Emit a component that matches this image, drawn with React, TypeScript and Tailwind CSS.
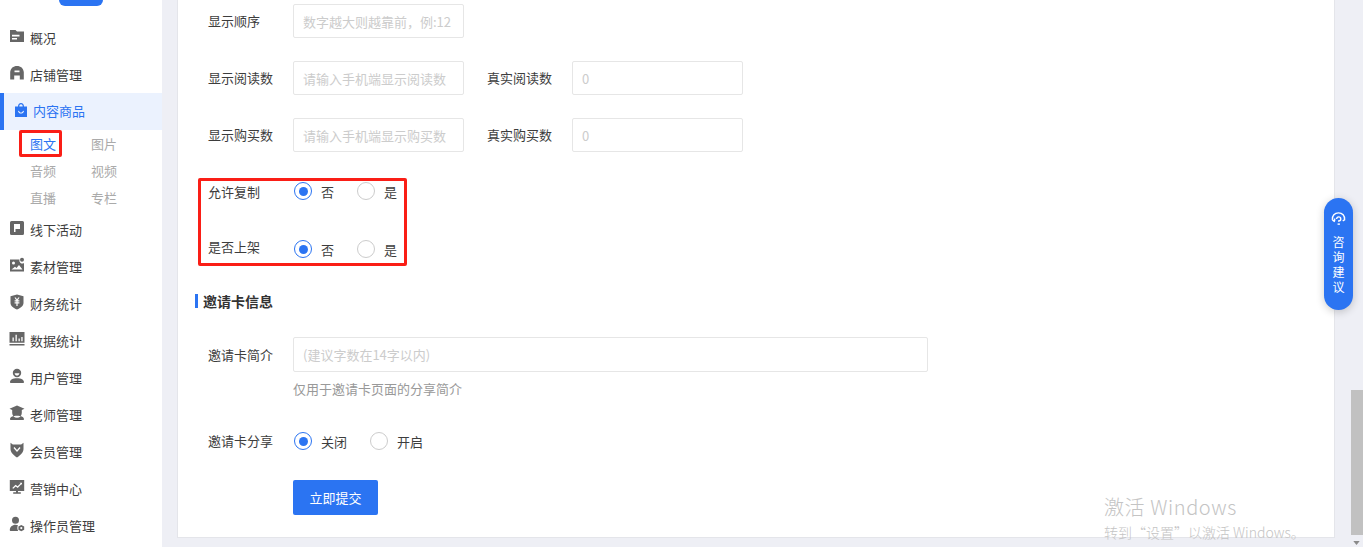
import type { ReactNode } from 'react'

const icons: Record<string, ReactNode> = {
  folder: <path d="M1 2h5.500L8 3.500h7V14H1zM3 6.800v1.700h7.500V6.800zm0 3.200v1.500h5V10z" fillRule="evenodd" />,
  store: <path d="M8 1c3.800 0 6.300 2.300 6.800 6v7.500h-4V10.500H5.200v4h-4V7C1.700 3.300 4.200 1 8 1zM5.500 5.500v1.700h5V5.500z" fillRule="evenodd" />,
  bag: <path d="M5 4.500C5 2.500 6.200 1 8 1s3 1.500 3 3.500h3V15H2V4.500zm1.300 0h3.400C9.700 3.200 9 2.300 8 2.300s-1.700.9-1.700 2.200zM5 9c.5 1.800 1.600 2.600 3 2.600S10.500 10.800 11 9l-1-.3c-.3 1.200-1 1.800-2 1.800s-1.700-.6-2-1.800z" fillRule="evenodd" />,
  flag: <path d="M2.500 1h11A1.500 1.500 0 0 1 15 2.500v11a1.500 1.500 0 0 1-1.500 1.500h-11A1.500 1.500 0 0 1 1 13.500v-11A1.500 1.500 0 0 1 2.500 1zM5 4v8h1.500V9H11V4z" fillRule="evenodd" />,
  image: <path d="M1 2.500h9.500a3 3 0 0 0 4.500 3.500v8.500H1zM4.500 4.500a1.500 1.500 0 1 0 0 3 1.500 1.500 0 0 0 0-3zM2.500 12.500h11L10 8l-2.500 3-1.500-1.300zM13 .8a2 2 0 1 1 0 4 2 2 0 0 1 0-4z" fillRule="evenodd" />,
  shield: <path d="M8 .5l6.500 1.800V9c0 3-2.800 5-6.500 6.500C4.300 14 1.500 12 1.500 9V2.300zM5.500 3.500l1.700 2.800H5.600v1.100h1.800v.9H5.600v1.100h1.800V12h1.200v-2.600h1.800V8.300H8.600v-.9h1.800V6.300H8.800l1.700-2.800H9.200L8 5.600 6.800 3.500z" fillRule="evenodd" />,
  chart: <path d="M.5 1h15v10.800H.5zM3.500 6.500v3.800h1.300V6.500zm3-2.800v6.600h1.300V3.700zm3 3.800v2.800h1.300V7.500zm2.800-1.500v4.300h1.300V6zM.5 13h15v1.500H.5z" fillRule="evenodd" />,
  user: <path d="M8 .8a4.200 4.200 0 1 1 0 8.400A4.200 4.200 0 0 1 8 .8zM5.600 5.300C5.900 7 6.900 7.600 8 7.600s2.100-.6 2.400-2.300zM1 14c.2-2.300 2.700-3.800 7-3.800s6.800 1.500 7 3.800c0 .6-.4 1-1 1H2c-.6 0-1-.4-1-1z" fillRule="evenodd" />,
  teacher: <path d="M8 .5l7.500 3.200-2.700 1.200V8A4.800 4.800 0 0 1 3.200 8V4.900L.5 3.700zM1 14c.3-2.200 3-3.300 7-3.300s6.700 1.100 7 3.300c0 .6-.4 1-1 1H2c-.6 0-1-.4-1-1z" fillRule="evenodd" />,
  badge: <path d="M1.500.8l2.300 1.700h8.400L14.500.8v6.200c0 3.500-3.300 6.500-6.500 8.500-3.200-2-6.500-5-6.500-8.500zM4.500 6l3.500 4 3.500-4-1-.9L8 8 5.500 5.100z" fillRule="evenodd" />,
  monitor: <path d="M.8 1h14.400v11H9v1.300h2.800v1.400H4.200v-1.400H7V12H.8zM3.300 9l.9.8 2.500-2.400 2 1.500L12.500 5l.5 1.300V3.800h-2.500l1 .6-2.900 2.800-2-1.500z" fillRule="evenodd" />,
  operator: <path d="M6.500.8a3.500 3.500 0 1 1 0 7 3.500 3.500 0 0 1 0-7zM.8 14c0-3 2.400-5.300 5.700-5.300 1 0 1.800.2 2.500.6-.9 1.400-.9 3.800.2 5.700H1.800c-.6 0-1-.4-1-1zM12.300 9l2.900 1.600v3.100l-2.900 1.600-2.900-1.600v-3.100zm0 2a1.100 1.100 0 1 0 0 2.200 1.100 1.100 0 0 0 0-2.200z" fillRule="evenodd" />,
}

function MenuIcon({ name, active }: { name: string; active?: boolean }) {
  return (
    <svg viewBox="0 0 16 16" className={`h-[16px] w-[16px] shrink-0 -translate-y-[2px] ${active ? 'fill-[#2b74f2]' : 'fill-[#666666]'}`}>
      {icons[name]}
    </svg>
  )
}

function MenuItem({ icon, label, active }: { icon: string; label: string; active?: boolean }) {
  if (active) {
    return (
      <div className="flex h-[37px] items-center gap-[4px] border-l-4 border-[#2b74f2] bg-[#ebf2fe] pl-[9px] text-[#2b74f2]">
        <MenuIcon name={icon} active />
        <span className="-translate-y-px">{label}</span>
      </div>
    )
  }
  return (
    <div className="flex h-[37px] items-center gap-[5px] pl-[9px] text-[#3d3d3d]">
      <MenuIcon name={icon} />
      <span>{label}</span>
    </div>
  )
}

function Radio({ label, checked }: { label: string; checked?: boolean }) {
  return (
    <div className="flex items-center gap-[9px]">
      <span className={`flex h-[18px] w-[18px] items-center justify-center rounded-full border-[1.5px] ${checked ? 'border-[#2b74f2]' : 'border-[#cccccc]'}`}>
        {checked && <span className="h-[9px] w-[9px] rounded-full bg-[#2b74f2]" />}
      </span>
      <span className="translate-y-px text-[#3d3d3d]">{label}</span>
    </div>
  )
}

function Field({ label, placeholder }: { label: string; placeholder: string }) {
  return (
    <div className="flex items-center">
      <label className="w-[85px] shrink-0 text-[#3d3d3d]">{label}</label>
      <input
        placeholder={placeholder}
        className="h-[34px] w-[171px] rounded-[2px] border border-[#e6e6e6] px-[9px] text-[13px] outline-none placeholder:text-[#cccccc]"
      />
    </div>
  )
}

function RadioRow({ label, options, className, labelClass }: { label: string; options: [string, string]; className?: string; labelClass?: string }) {
  return (
    <div className={`flex h-[34px] items-center ${className ?? ''}`}>
      <label className={`w-[85px] shrink-0 text-[#3d3d3d] ${labelClass ?? ''}`}>{label}</label>
      <div className="ml-px flex gap-[22px]">
        <Radio label={options[0]} checked />
        <div className="ml-px">
          <Radio label={options[1]} />
        </div>
      </div>
    </div>
  )
}

export default function App() {
  return (
    <div className="relative flex h-[547px] w-[1363px] overflow-hidden bg-[#eeeff5] font-['Noto_Sans_CJK_SC','Liberation_Sans',sans-serif] text-[13px]">
      <aside className="w-[162px] shrink-0 bg-white">
        <div className="ml-[59px] h-[6px] w-[44px] rounded-b-[10px] bg-[#2b74f2]" />
        <div className="mt-[13px]">
          <MenuItem icon="folder" label="概况" />
          <MenuItem icon="store" label="店铺管理" />
          <MenuItem icon="bag" label="内容商品" active />
          <div className="grid grid-cols-[61px_61px] pl-[30px]">
            {['图文', '图片', '音频', '视频', '直播', '专栏'].map((name, i) => (
              <div key={name} className={`flex h-[27px] items-center ${i === 0 ? 'text-[#2b74f2]' : 'text-[#aaaaaa]'}`}>
                {name}
              </div>
            ))}
          </div>
          <MenuItem icon="flag" label="线下活动" />
          <MenuItem icon="image" label="素材管理" />
          <MenuItem icon="shield" label="财务统计" />
          <MenuItem icon="chart" label="数据统计" />
          <MenuItem icon="user" label="用户管理" />
          <MenuItem icon="teacher" label="老师管理" />
          <MenuItem icon="badge" label="会员管理" />
          <MenuItem icon="monitor" label="营销中心" />
          <MenuItem icon="operator" label="操作员管理" />
        </div>
      </aside>

      <main className="ml-[15px] h-[538px] w-[1158px] shrink-0 border-r border-b border-l border-[#e4e5ea] bg-white pt-[4px] pl-[17px]">
        <div className="pl-[13px]">
          <Field label="显示顺序" placeholder="数字越大则越靠前，例:12" />
          <div className="mt-[23px] flex gap-[23px]">
            <Field label="显示阅读数" placeholder="请输入手机端显示阅读数" />
            <Field label="真实阅读数" placeholder="0" />
          </div>
          <div className="mt-[23px] flex gap-[23px]">
            <Field label="显示购买数" placeholder="请输入手机端显示购买数" />
            <Field label="真实购买数" placeholder="0" />
          </div>
          <RadioRow label="允许复制" options={['否', '是']} className="mt-[22px]" labelClass="translate-y-px" />
          <RadioRow label="是否上架" options={['否', '是']} className="mt-[24px]" labelClass="-translate-y-[2px]" />
        </div>

        <div className="mt-[25px] flex h-[20px] items-center gap-[5px] text-[14px] font-bold text-[#333333]">
          <span className="h-[14px] w-[3px] bg-[#2b74f2]" />
          <span>邀请卡信息</span>
        </div>

        <div className="pl-[13px]">
          <div className="mt-[26px] flex items-center">
            <label className="w-[85px] shrink-0 text-[#3d3d3d]">邀请卡简介</label>
            <input
              placeholder="(建议字数在14字以内)"
              className="h-[35px] w-[635px] rounded-[2px] border border-[#e6e6e6] px-[9px] text-[13px] outline-none placeholder:text-[#cccccc]"
            />
          </div>
          <div className="mt-[7px] h-[20px] pl-[85px] leading-[20px] text-[#999999]">仅用于邀请卡页面的分享简介</div>
          <RadioRow label="邀请卡分享" options={['关闭', '开启']} className="mt-[25px]" />
          <button className="mt-[22px] ml-[85px] h-[35px] w-[85px] rounded-[2px] bg-[#2b74f2] text-white">立即提交</button>
        </div>
      </main>

      {/* page scrollbar */}
      <div className="ml-[15px] flex h-full w-[13px] shrink-0 flex-col">
        <div className="mt-[390px] ml-px h-[145px] w-[12px] bg-[#c1c1c1]" />
        <svg viewBox="0 0 8 5" className="mt-[6px] ml-[3px] h-[4px] w-[7px] fill-[#8a8a8a]">
          <path d="M0 0h8L4 5z" />
        </svg>
      </div>

      {/* red annotations in the screenshot */}
      <div className="absolute top-[130px] left-[19px] h-[27px] w-[43px] rounded-[2px] border-[3px] border-[#fa1e16]" />
      <div className="absolute top-[178px] left-[198px] h-[88px] w-[209px] rounded-[2px] border-[3px] border-[#fa1e16]" />

      {/* consult button */}
      <div className="absolute top-[198px] left-[1324px] flex h-[112px] w-[29px] flex-col items-center rounded-full bg-[#2b74f2] pt-[13px] text-[12px] text-white shadow-[0_2px_8px_rgba(0,0,0,0.2)]">
        <svg viewBox="0 0 16 16" fill="none" stroke="currentColor" strokeWidth="1.500" className="h-[15px] w-[15px]">
          <path d="M1.500 9.500C1 5 4 2 8 2s7 3 6.500 7.500l-2 1" />
          <path d="M1.500 9.500l2 1.500c.5-.5.5-2 .5-3" />
          <path d="M6 8.500a2.200 2.200 0 1 1 2.200 2.200H7.500" />
          <path d="M7 14h2.500" />
        </svg>
        <div className="mt-[8px] flex flex-col items-center leading-[15px]">
          <span>咨</span>
          <span>询</span>
          <span>建</span>
          <span>议</span>
        </div>
      </div>

      {/* windows activation watermark */}
      <div className="pointer-events-none absolute top-[494px] left-[1104px] font-light whitespace-nowrap text-[#c4c4c4]">
        <div className="text-[20px] leading-[26px] tracking-[0.6px]">激活 Windows</div>
        <div className="mt-[2px] text-[14px] leading-[20px]">转到“设置”以激活 Windows。</div>
      </div>
    </div>
  )
}
